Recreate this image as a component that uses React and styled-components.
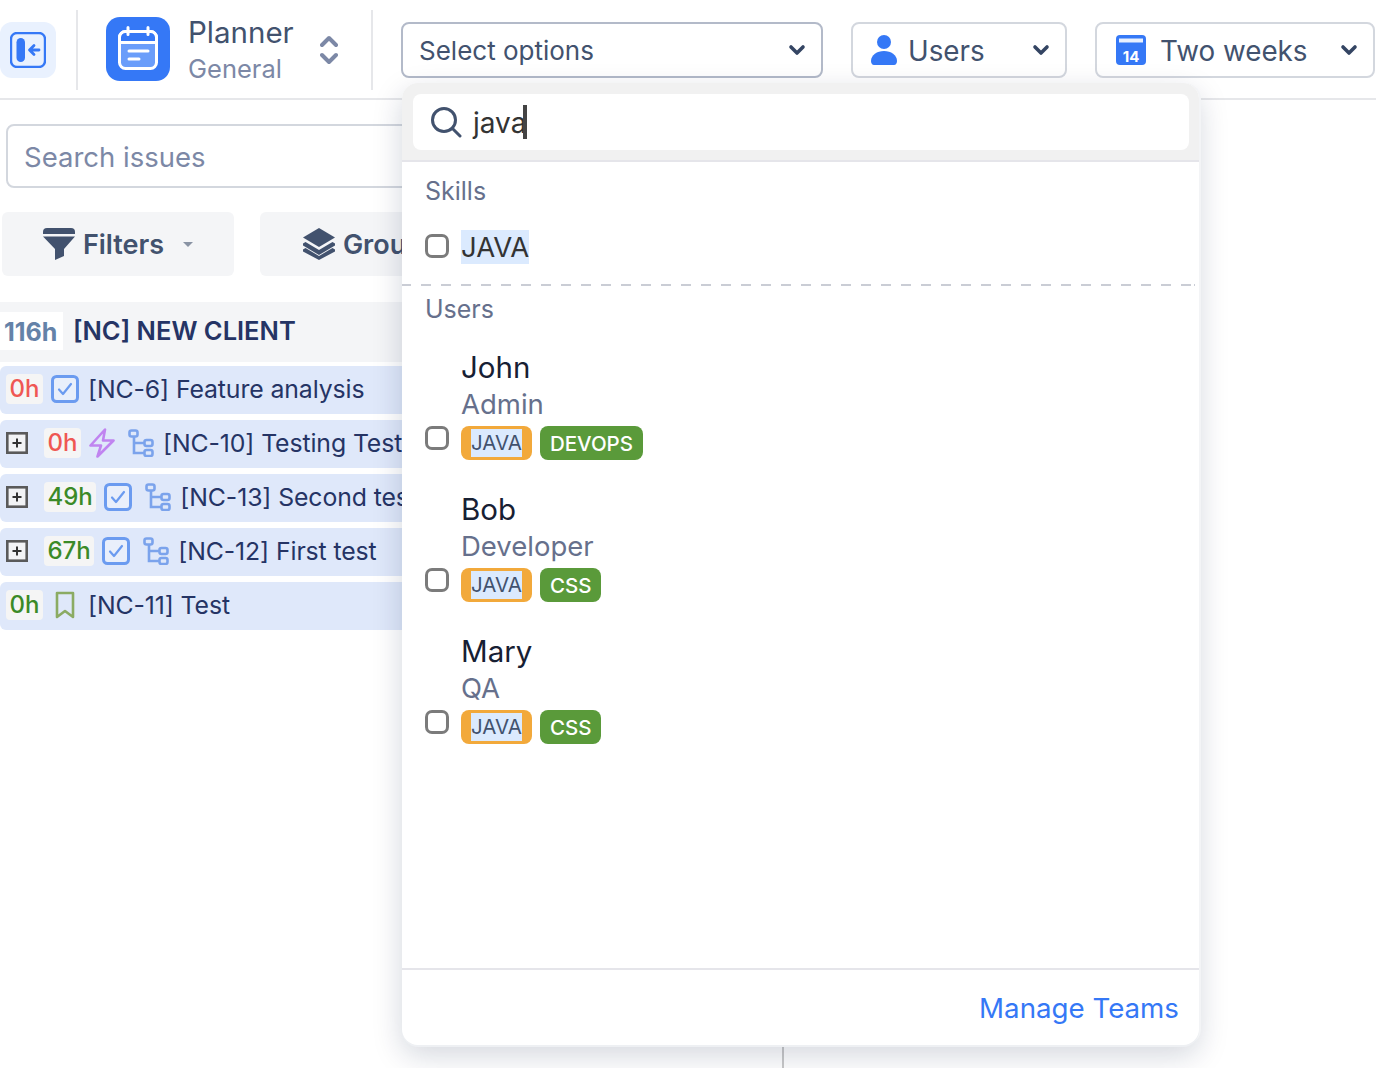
import styled, { createGlobalStyle } from 'styled-components'
import { ChevronDown } from 'lucide-react'

const GlobalStyle = createGlobalStyle`
  html, body {
    margin: 0;
    padding: 0;
    background: #fff;
    font-family: Inter, "Liberation Sans", sans-serif;
    overflow: hidden;
  }
  * { box-sizing: border-box; }
`

const SidebarIcon = () => (
  <svg width="36" height="36" viewBox="0 0 36 36" fill="none">
    <rect x="1" y="1" width="34" height="34" rx="6" stroke="#3578f6" strokeWidth="2.4" />
    <rect x="6.5" y="6" width="8.5" height="24" rx="4.25" fill="#3578f6" />
    <path d="M29 18H20M24 13.5L19.500 18l4.500 4.500" stroke="#3578f6" strokeWidth="2.8" strokeLinecap="round" strokeLinejoin="round" />
  </svg>
)

const PlannerIcon = () => (
  <svg width="40" height="44" viewBox="0 0 40 44" fill="none">
    <rect x="1.5" y="5.5" width="37" height="37" rx="6" fill="#6a9dfa" stroke="#fff" strokeWidth="3" />
    <path d="M1.5 11.5a6 6 0 0 1 6-6h25a6 6 0 0 1 6 6v5h-37z" fill="#3578f6" stroke="#fff" strokeWidth="3" />
    <path d="M10 1.5v7M30 1.5v7" stroke="#fff" strokeWidth="3" strokeLinecap="round" />
    <path d="M11 25h19M11 33h10" stroke="#fff" strokeWidth="3" strokeLinecap="round" />
  </svg>
)

const UpDownIcon = () => (
  <svg width="18" height="30" viewBox="0 0 18 30" fill="none">
    <path d="M2 10l7-7 7 7M2 20l7 7 7-7" stroke="#7c88a6" strokeWidth="4" strokeLinecap="round" strokeLinejoin="round" />
  </svg>
)

const FunnelIcon = () => (
  <svg width="32" height="32" viewBox="0 0 32 32" fill="#42526e">
    <path d="M4 0h24a4 4 0 0 1 4 4v2H0V4a4 4 0 0 1 4-4z" />
    <path d="M0 8.500h32L21 21v7l-9 4V21z" />
  </svg>
)

const LayersIcon = () => (
  <svg width="32" height="32" viewBox="0 0 32 32" fill="#42526e">
    <path d="M16 0l16 9.500-16 9.500L0 9.500z" />
    <path d="M2.500 14L16 22l13.500-8 2.500 1.500v2L16 27 0 17.500v-2z" />
    <path d="M2.500 20L16 28l13.500-8 2.500 1.500v2L16 32 0 23.500v-2z" />
  </svg>
)

const CheckIcon = () => (
  <svg width="28" height="28" viewBox="0 0 28 28" fill="none">
    <rect x="1.500" y="1.500" width="25" height="25" rx="4" fill="#e9effb" stroke="#6b9bf0" strokeWidth="3" />
    <path d="M8 14.500l4 4.500 8-10" stroke="#6b9bf0" strokeWidth="2.200" strokeLinecap="round" strokeLinejoin="round" />
  </svg>
)

const TreeIcon = () => (
  <svg width="26" height="28" viewBox="0 0 26 28" fill="none" stroke="#7ba3ec" strokeWidth="2.600">
    <rect x="1.500" y="1.500" width="8" height="6" rx="2" />
    <rect x="16.500" y="11" width="8" height="6" rx="2" />
    <rect x="16.500" y="21" width="8" height="6" rx="2" />
    <path d="M6 8v16h10.500M6 14h10.500" />
  </svg>
)

const BoltIcon = () => (
  <svg width="26" height="30" viewBox="0 0 26 30" fill="none">
    <path d="M16 1.500L1.500 17.500H12L8.500 28.500 24.500 12.500H14z" stroke="#c084f0" strokeWidth="2.600" strokeLinejoin="round" />
  </svg>
)

const BookmarkIcon = () => (
  <svg width="20" height="28" viewBox="0 0 20 28" fill="none">
    <path d="M2 2h16v24l-8-6-8 6z" stroke="#8bab63" strokeWidth="2.600" strokeLinejoin="round" />
  </svg>
)

const ExpandIcon = () => (
  <svg width="22" height="22" viewBox="0 0 22 22" fill="none">
    <rect x="1.300" y="1.300" width="19.400" height="19.400" fill="#f2f3f5" stroke="#5a5a5a" strokeWidth="2.600" />
    <path d="M11 6.500v9M6.500 11h9" stroke="#333" strokeWidth="2" />
  </svg>
)

const SearchIcon = () => (
  <svg width="32" height="32" viewBox="0 0 32 32" fill="none">
    <circle cx="14" cy="14" r="11.500" stroke="#42526e" strokeWidth="3" />
    <path d="M23 23l7 7" stroke="#42526e" strokeWidth="3" strokeLinecap="round" />
  </svg>
)

const UserIcon = () => (
  <svg width="26" height="30" viewBox="0 0 26 30" fill="#3578f6">
    <circle cx="13" cy="7" r="7" />
    <path d="M0 26c0-6 6-10 13-10s13 4 13 10c0 2-1 4-3 4H3c-2 0-3-2-3-4z" />
  </svg>
)

const CalendarIcon = () => (
  <svg width="30" height="30" viewBox="0 0 30 30">
    <rect width="30" height="30" rx="4" fill="#3578f6" />
    <rect x="3" y="3.500" width="24" height="4" fill="#e8f0fe" />
  </svg>
)

const Page = styled.div`
  width: 1376px;
  height: 1068px;
  position: relative;
  display: flex;
  flex-direction: column;
  overflow: hidden;
`
const Header = styled.header`
  height: 100px;
  display: flex;
  align-items: center;
  border-bottom: 2px solid #e6e7ea;
  padding-top: 2px;
  flex: none;
`
const CollapseButton = styled.button`
  width: 56px;
  height: 56px;
  border: 0;
  padding: 0;
  border-radius: 12px;
  background: #e9f1fe;
  display: flex;
  align-items: center;
  justify-content: center;
`
const Divider = styled.div`
  width: 2px;
  height: 80px;
  background: #e6e7ea;
  margin: 0 ${(p) => p.$right}px 0 20px;
  flex: none;
`
const LogoTile = styled.div`
  width: 64px;
  height: 64px;
  margin-bottom: 2px;
  border-radius: 14px;
  background: #3578f6;
  display: flex;
  align-items: center;
  justify-content: center;
  flex: none;
  padding-bottom: 2px;
`
const ProjectText = styled.div`
  margin: 0 0 1px 18px;
  width: 132px;
  display: flex;
  flex-direction: column;
`
const ProjectName = styled.div`
  font-size: 29.5px;
  line-height: 36px;
  color: #42526e;
`
const ProjectSub = styled.div`
  font-size: 25.5px;
  line-height: 34px;
  color: #7c88a6;
  margin-top: 2px;
`
const UpDown = styled.div`
  display: flex;
  margin-right: 13px;
`
const SelectBox = styled.div`
  width: ${(p) => p.$width}px;
  margin-left: ${(p) => p.$left}px;
  height: 56px;
  flex: none;
  border: 2px solid ${(p) => (p.$active ? '#b3bac9' : '#d3d7de')};
  border-radius: 8px;
  display: flex;
  align-items: center;
  padding: 0 12px 0 ${(p) => p.$pad}px;
  color: #42526e;
  font-size: ${(p) => (p.$active ? 26 : 27.8)}px;
  background: #fff;
`
const SelectLabel = styled.span`
  flex: 1;
  margin-left: ${(p) => p.$left || 0}px;
  padding-top: ${(p) => (p.$left ? 2 : 0)}px;
`
const DayNumber = styled.span`
  position: absolute;
  left: 0;
  right: 0;
  top: 12px;
  text-align: center;
  color: #fff;
  font-size: 15px;
  font-weight: 700;
`
const CalendarWrap = styled.span`
  position: relative;
  width: 30px;
  height: 30px;
  display: flex;
`
const Body = styled.div`
  flex: 1;
  display: flex;
`
const LeftPanel = styled.div`
  width: 784px;
  border-right: 2px solid #c9c9c9;
  padding-top: 24px;
`
const SearchField = styled.div`
  margin-left: 6px;
  height: 64px;
  border: 2px solid #d3d7de;
  border-radius: 8px;
  color: #7c88a6;
  font-size: 27.5px;
  display: flex;
  align-items: center;
  padding: 2px 0 0 16px;
`
const ToolRow = styled.div`
  display: flex;
  gap: 26px;
  margin: 24px 0 26px 2px;
`
const ToolButton = styled.div`
  width: ${(p) => p.$width}px;
  height: 64px;
  border-radius: 6px;
  background: #f4f5f7;
  display: flex;
  align-items: center;
  justify-content: center;
  gap: 8px;
  color: #42526e;
  font-size: 27px;
  font-weight: 600;
`
const Caret = styled.span`
  width: 0;
  height: 0;
  margin-left: 11px;
  border: 5px solid transparent;
  border-top: 5px solid #8993a4;
  border-bottom: 0;
`
const GroupRow = styled.div`
  height: 60px;
  background: #f4f5f7;
  display: flex;
  align-items: center;
  margin-bottom: 4px;
  padding-bottom: 2px;
`
const GroupHours = styled.span`
  height: 38px;
  width: 63px;
  background: #fff;
  color: #6482a8;
  font-size: 25px;
  font-weight: 700;
  display: flex;
  align-items: center;
  padding: 1px 0 0 4px;
`
const GroupTitle = styled.span`
  margin: 0 0 2px 10px;
  color: #253465;
  font-size: 25.5px;
  font-weight: 600;
`
const IssueList = styled.div`
  display: flex;
  flex-direction: column;
  gap: 6px;
`
const IssueRow = styled.div`
  height: 48px;
  border-radius: 6px;
  background: #dfe8fa;
  display: flex;
  align-items: center;
  padding: 0 0 3px 6px;
`
const Hours = styled.span`
  height: 30px;
  margin-left: ${(p) => (p.$nested ? 16 : 0)}px;
  padding: 0 3.5px;
  border-radius: 4px;
  background: #f5f5f5;
  color: ${(p) => (p.$late ? '#ef5753' : '#3b8a27')};
  font-size: 24px;
  font-weight: 500;
  display: flex;
  align-items: center;
`
const IconSlot = styled.span`
  display: flex;
  margin-left: ${(p) => p.$left}px;
`
const IssueTitle = styled.span`
  margin-left: ${(p) => p.$left}px;
  color: #253465;
  font-size: 24.8px;
  letter-spacing: -0.1px;
  white-space: nowrap;
`
const Dropdown = styled.div`
  position: absolute;
  left: 402px;
  top: 83px;
  width: 797px;
  height: 962px;
  border-radius: 16px;
  background: #fff;
  box-shadow: 0 2px 0 #eef0f3, 2px 0 0 #f3f4f6, 0 10px 30px rgba(9, 30, 66, 0.18);
  display: flex;
  flex-direction: column;
  overflow: hidden;
`
const DropSearch = styled.div`
  height: 79px;
  flex: none;
  padding: 11px 10px 10px 11px;
  background: #f1f1f1;
  border-bottom: 2px solid #e5e5ea;
`
const DropInput = styled.div`
  height: 56px;
  border-radius: 8px;
  background: #fff;
  display: flex;
  align-items: center;
  padding-left: 17px;
  color: #333;
  font-size: 28px;
`
const TypedText = styled.span`
  margin: 2px 0 0 11px;
`
const TextCaret = styled.span`
  width: 4px;
  height: 34px;
  background: #444;
  margin-left: -3px;
`
const Options = styled.div`
  flex: 1;
  display: flex;
  flex-direction: column;
`
const SectionLabel = styled.div`
  margin: ${(p) => p.$top}px 0 0 23px;
  color: #66708c;
  font-size: 25px;
  line-height: 32px;
`
const SkillOption = styled.div`
  display: flex;
  align-items: center;
  gap: 12px;
  margin: 23px 0 20px 23px;
  height: 34px;
`
const Box = styled.span`
  width: 24px;
  height: 24px;
  flex: none;
  border: 3px solid #7b7b7b;
  border-radius: 7px;
  background: #fff;
  margin-bottom: ${(p) => p.$bottom}px;
`
const Mark = styled.mark`
  background: #dbeafe;
  color: #333;
`
const SkillText = styled.span`
  font-size: 27.5px;
  line-height: 34px;
`
const DashedLine = styled.div`
  height: 2px;
  width: 793px;
  background: repeating-linear-gradient(90deg, #cacdd5 0 10px, transparent 10px 20px);
  background-position: -1px 0;
`
const UserList = styled.div`
  display: flex;
  flex-direction: column;
  gap: 31px;
  margin: 24px 0 0 23px;
`
const UserOption = styled.div`
  display: flex;
  align-items: flex-end;
  gap: 12px;
`
const UserName = styled.div`
  font-size: 29.5px;
  line-height: 37px;
  color: #172033;
`
const UserRole = styled.div`
  font-size: 27.5px;
  line-height: 36px;
  color: #66708c;
  margin-bottom: 4px;
`
const Tags = styled.div`
  display: flex;
  gap: 8px;
`
const Tag = styled.span`
  height: 34px;
  padding: 0 10px;
  border-radius: 8px;
  background: ${(p) => (p.$match ? '#f2a93b' : '#5a9a3a')};
  color: #fff;
  font-size: 20.5px;
  font-weight: 500;
  display: flex;
  align-items: center;
`
const TagMark = styled.mark`
  background: #dbeafe;
  color: #42526e;
  font-weight: 400;
  line-height: 28px;
`
const DropFooter = styled.div`
  height: 77px;
  flex: none;
  border-top: 2px solid #e5e5ea;
  display: flex;
  align-items: center;
  justify-content: flex-end;
  padding: 1px 20px 0 0;
  color: #3578f6;
  font-size: 27.7px;
`

const issues = [
  { id: 1, hours: '0h', late: true, icons: [<CheckIcon />], title: '[NC-6] Feature analysis' },
  { id: 2, hours: '0h', late: true, nested: true, icons: [<BoltIcon />, <TreeIcon />], title: '[NC-10] Testing Test' },
  { id: 3, hours: '49h', nested: true, icons: [<CheckIcon />, <TreeIcon />], title: '[NC-13] Second test' },
  { id: 4, hours: '67h', nested: true, icons: [<CheckIcon />, <TreeIcon />], title: '[NC-12] First test' },
  { id: 5, hours: '0h', icons: [<BookmarkIcon />], title: '[NC-11] Test', bookmark: true },
]

const users = [
  { name: 'John', role: 'Admin', other: 'DEVOPS' },
  { name: 'Bob', role: 'Developer', other: 'CSS' },
  { name: 'Mary', role: 'QA', other: 'CSS' },
]

const App = () => {
  return (
    <Page>
      <GlobalStyle />
      <Header>
        <CollapseButton><SidebarIcon /></CollapseButton>
        <Divider $right={28} />
        <LogoTile><PlannerIcon /></LogoTile>
        <ProjectText>
          <ProjectName>Planner</ProjectName>
          <ProjectSub>General</ProjectSub>
        </ProjectText>
        <UpDown><UpDownIcon /></UpDown>
        <Divider $right={0} />
        <SelectBox $width={422} $left={28} $pad={16} $active>
          <SelectLabel>Select options</SelectLabel>
          <ChevronDown size={24} strokeWidth={3.6} color="#344563" />
        </SelectBox>
        <SelectBox $width={216} $left={28} $pad={18}>
          <UserIcon />
          <SelectLabel $left={11}>Users</SelectLabel>
          <ChevronDown size={24} strokeWidth={3.6} color="#344563" />
        </SelectBox>
        <SelectBox $width={280} $left={28} $pad={19}>
          <CalendarWrap>
            <CalendarIcon />
            <DayNumber>14</DayNumber>
          </CalendarWrap>
          <SelectLabel $left={14}>Two weeks</SelectLabel>
          <ChevronDown size={24} strokeWidth={3.6} color="#344563" />
        </SelectBox>
      </Header>
      <Body>
        <LeftPanel>
          <SearchField>Search issues</SearchField>
          <ToolRow>
            <ToolButton $width={232}><FunnelIcon />Filters<Caret /></ToolButton>
            <ToolButton $width={245}><LayersIcon />Group by</ToolButton>
          </ToolRow>
          <GroupRow>
            <GroupHours>116h</GroupHours>
            <GroupTitle>[NC] NEW CLIENT</GroupTitle>
          </GroupRow>
          <IssueList>
            {issues.map((issue) => (
              <IssueRow key={issue.id}>
                {issue.nested && <ExpandIcon />}
                <Hours $late={issue.late} $nested={issue.nested}>{issue.hours}</Hours>
                {issue.icons.map((icon, i) => (
                  <IconSlot key={i} $left={issue.bookmark ? 12 : i === 0 ? 8 : 13}>{icon}</IconSlot>
                ))}
                <IssueTitle $left={issue.bookmark ? 13 : 9}>{issue.title}</IssueTitle>
              </IssueRow>
            ))}
          </IssueList>
        </LeftPanel>
      </Body>
      <Dropdown>
        <DropSearch>
          <DropInput>
            <SearchIcon />
            <TypedText>java</TypedText>
            <TextCaret />
          </DropInput>
        </DropSearch>
        <Options>
          <SectionLabel $top={13}>Skills</SectionLabel>
          <SkillOption>
            <Box $bottom={2} />
            <SkillText><Mark>JAVA</Mark></SkillText>
          </SkillOption>
          <DashedLine />
          <SectionLabel $top={7}>Users</SectionLabel>
          <UserList>
            {users.map((user) => (
              <UserOption key={user.name}>
                <Box $bottom={10} />
                <div>
                  <UserName>{user.name}</UserName>
                  <UserRole>{user.role}</UserRole>
                  <Tags>
                    <Tag $match><TagMark>JAVA</TagMark></Tag>
                    <Tag>{user.other}</Tag>
                  </Tags>
                </div>
              </UserOption>
            ))}
          </UserList>
        </Options>
        <DropFooter>Manage Teams</DropFooter>
      </Dropdown>
    </Page>
  )
}

export default App
